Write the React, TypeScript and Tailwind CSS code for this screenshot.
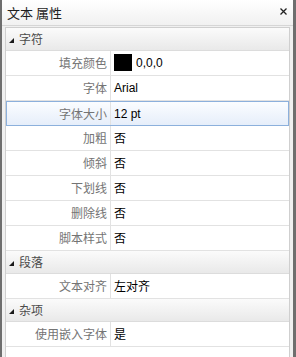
const cjk = "font-['Microsoft_YaHei','Noto_Sans_CJK_SC',sans-serif]";

type Row = { label: string; value: string; swatch?: boolean; selected?: boolean; latin?: boolean };
type Group = { name: string; rows: Row[] };

const groups: Group[] = [
  {
    name: '字符',
    rows: [
      { label: '填充颜色', value: '0,0,0', swatch: true, latin: true },
      { label: '字体', value: 'Arial', latin: true },
      { label: '字体大小', value: '12 pt', latin: true, selected: true },
      { label: '加粗', value: '否' },
      { label: '倾斜', value: '否' },
      { label: '下划线', value: '否' },
      { label: '删除线', value: '否' },
      { label: '脚本样式', value: '否' },
    ],
  },
  { name: '段落', rows: [{ label: '文本对齐', value: '左对齐' }] },
  { name: '杂项', rows: [{ label: '使用嵌入字体', value: '是' }] },
];

function Category({ name }: { name: string }) {
  return (
    <div className="h-[23px] flex items-center bg-gradient-to-b from-[#fbfbfb] to-[#e9e9e9] border-b border-[#dcdcdc]">
      <svg width="5" height="5" viewBox="0 0 5 5" className="ml-[3px] mr-[5px] mt-[2px]">
        <polygon points="5,0 5,5 0,5" fill="#1a1a1a" />
      </svg>
      <span className={`${cjk} text-[12px] text-[#4b4b4b]`}>{name}</span>
    </div>
  );
}

function PropRow({ row }: { row: Row }) {
  return (
    <div
      className={
        row.selected
          ? 'h-[25px] flex items-stretch border border-[#8cb0dc] bg-gradient-to-b from-[#fbfdff] to-[#e6eefa]'
          : 'h-[25px] flex items-stretch border-b border-[#e2e2e2]'
      }
    >
      <div
        className={`${cjk} ${row.selected ? 'w-[104px]' : 'w-[105px]'} shrink-0 flex items-center justify-end pr-[3px] text-[12px] text-[#747474] border-r border-[#e2e2e2]`}
      >
        {row.label}
      </div>
      <div
        className={`flex items-center pl-[3px] text-[12px] text-black ${
          row.latin ? "font-['Liberation_Sans',Arial,sans-serif]" : cjk
        }`}
      >
        {row.swatch && <span className="w-[18px] h-[17px] bg-black mr-[4px] mt-[-1px]" />}
        {row.value}
      </div>
    </div>
  );
}

export default function App() {
  return (
    <div className="w-[296px] h-[357px] overflow-hidden bg-[#f0f0f0] border-l-2 border-r-[3px] border-[#6e6e6e] flex flex-col">
      <div className="h-[26px] shrink-0 flex items-center justify-between pl-[5px] pr-[6px] bg-gradient-to-b from-[#ffffff] to-[#f1f1f1] border-b border-[#d6d6d6]">
        <span className={`${cjk} text-[13px] text-[#1e1e1e]`}>文本 属性</span>
        <svg width="7" height="7" viewBox="0 0 7 7" className="mb-[3px]">
          <path d="M0.5 0.5 L6.5 6.5 M6.5 0.5 L0.5 6.5" stroke="#222" strokeWidth="1.3" />
        </svg>
      </div>
      <div className="flex-1 mx-[3px] mt-[1px] bg-white border-t border-l border-r border-[#cfcfcf]">
        {groups.map((g) => (
          <div key={g.name}>
            <Category name={g.name} />
            {g.rows.map((r) => (
              <PropRow key={r.label} row={r} />
            ))}
          </div>
        ))}
      </div>
    </div>
  );
}
